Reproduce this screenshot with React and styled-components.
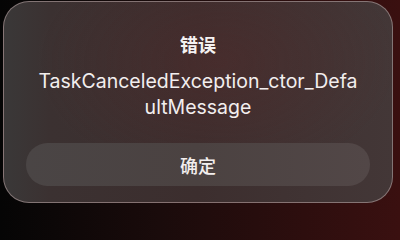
import styled, { createGlobalStyle } from 'styled-components'

const GlobalStyle = createGlobalStyle`
  html, body {
    margin: 0;
    padding: 0;
    width: 400px;
    height: 205px;
    overflow: hidden;
    background: linear-gradient(90deg, #050505 0%, #1a0b0b 40%, #3a1010 100%);
  }
  * {
    box-sizing: border-box;
  }
`

const Screen = styled.div`
  width: 400px;
  height: 205px;
  padding: 1px 7px 2px 3px;
  display: flex;
`

const Dialog = styled.div`
  flex: 1;
  border-radius: 26px;
  border: 1px solid rgba(190, 170, 170, 0.55);
  background:
    radial-gradient(ellipse at 55% 30%, rgba(90, 40, 40, 0.35) 0%, rgba(90, 40, 40, 0) 60%),
    linear-gradient(90deg, #3a3838 0%, #3b3131 12%, #3c2e2e 50%, #433737 100%);
  display: flex;
  flex-direction: column;
  align-items: center;
  padding: 30px 22px 16px;
  font-family: Inter, "Noto Sans", "Noto Sans CJK SC", sans-serif;
  color: #f2eeee;
`

const Title = styled.div`
  font-family: "Noto Sans CJK SC", sans-serif;
  font-size: 18px;
  font-weight: 700;
  line-height: 24px;
  color: #f5f2f2;
`

const Message = styled.div`
  margin-top: 12px;
  width: 321px;
  text-align: center;
  font-size: 19.5px;
  line-height: 26px;
  word-break: break-all;
  color: #f2eeee;
`

const Button = styled.button`
  margin-top: auto;
  width: 100%;
  height: 43px;
  border: none;
  border-radius: 22px;
  background: linear-gradient(90deg, #4a4545 0%, #4b4241 50%, #524747 100%);
  color: #f2eeee;
  font-family: "Noto Sans CJK SC", sans-serif;
  font-size: 18px;
  font-weight: 500;
  cursor: pointer;
`

export default function App() {
  return (
    <>
      <GlobalStyle />
      <Screen>
        <Dialog>
          <Title>错误</Title>
          <Message>TaskCanceledException_ctor_DefaultMessage</Message>
          <Button>确定</Button>
        </Dialog>
      </Screen>
    </>
  )
}
